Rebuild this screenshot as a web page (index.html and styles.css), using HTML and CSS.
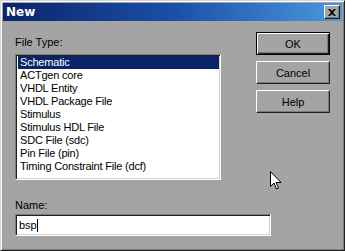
FILE: index.html
```html
<!DOCTYPE html>
<html lang="en">
<head>
    <meta charset="UTF-8">
    <title>New</title>
    <link rel="stylesheet" href="styles.css">
</head>
<body>
    <div class="window">
        <div class="titlebar">
            <span class="title">New</span>
            <span class="close-btn">
                <svg width="8" height="7" viewBox="0 0 8 7"><path d="M0 0h2l2 2 2-2h2L5 3.5 8 7H6L4 5 2 7H0l3-3.5z" fill="#000"/></svg>
            </span>
        </div>

        <div class="content">
            <div class="top-row">
                <div class="left-col">
                    <div class="label">File Type:</div>
                    <ul class="listbox">
                        <li class="selected">Schematic</li>
                        <li>ACTgen core</li>
                        <li>VHDL Entity</li>
                        <li>VHDL Package File</li>
                        <li>Stimulus</li>
                        <li>Stimulus HDL File</li>
                        <li>SDC File (sdc)</li>
                        <li>Pin File (pin)</li>
                        <li>Timing Constraint File (dcf)</li>
                    </ul>
                </div>

                <div class="right-col">
                    <button class="btn default">OK</button>
                    <button class="btn">Cancel</button>
                    <button class="btn">Help</button>
                </div>
            </div>

            <div class="name-row">
                <div class="label">Name:</div>
                <div class="textbox">bsp<span class="caret"></span></div>
            </div>
        </div>

        <!-- mouse pointer sitting over the dialog -->
        <svg class="cursor" width="12" height="19" viewBox="0 0 12 19">
            <path d="M0.5 0.5v15l3.5-3.5 2.5 6 2-1-2.5-5.5h5z" fill="#fff" stroke="#000"/>
        </svg>
    </div>
</body>
</html>
```

FILE: styles.css
```css
body {
    margin: 0;
    font-family: "Liberation Sans", Arial, sans-serif;
    font-size: 11px;
}

.window {
    position: relative;
    width: 345px;
    height: 251px;
    box-sizing: border-box;
    background: #a4a4a4;
    border: 1px solid;
    border-color: #d4d4d4 #202020 #202020 #d4d4d4;
    box-shadow: inset 1px 1px 0 #fff, inset -1px -1px 0 #7c7c7c;
    padding: 2px;
}

.titlebar {
    height: 18px;
    display: flex;
    align-items: center;
    justify-content: space-between;
    padding: 0 2px 0 3px;
    background: linear-gradient(to right, #0a246a, #1a4fa8 50%, #4a98e0);
}

.title {
    color: #fff;
    font-weight: bold;
    font-size: 12px;
    font-family: "DejaVu Sans", sans-serif;
}

.close-btn {
    width: 16px;
    height: 14px;
    box-sizing: border-box;
    background: #a4a4a4;
    border: 1px solid;
    border-color: #fff #202020 #202020 #fff;
    box-shadow: inset -1px -1px 0 #7c7c7c;
    display: flex;
    align-items: center;
    justify-content: center;
}

.content {
    padding: 0 0 0 12px;
}

.top-row {
    display: flex;
    justify-content: space-between;
}

.left-col {
    padding-top: 14px;
}

.label {
    color: #000;
    height: 14px;
    line-height: 14px;
}

.listbox {
    list-style: none;
    margin: 5px 0 0 0;
    padding: 1px 1px;
    width: 206px;
    height: 126px;
    box-sizing: border-box;
    background: #fff;
    border: 1px solid;
    border-color: #7c7c7c #fff #fff #7c7c7c;
    box-shadow: inset 1px 1px 0 #202020, inset -1px -1px 0 #d4d4d4;
    letter-spacing: -0.2px;
}

.listbox li {
    height: 13px;
    line-height: 13px;
    padding-left: 2px;
    margin-left: 1px;
}

.listbox li.selected {
    background: #0a246a;
    color: #fff;
}

.right-col {
    display: flex;
    flex-direction: column;
    padding: 11px 12px 0 0;
    gap: 6px;
}

.btn {
    width: 74px;
    height: 23px;
    box-sizing: border-box;
    font-family: "Liberation Sans", Arial, sans-serif;
    font-size: 11px;
    color: #000;
    background: #a4a4a4;
    border: 1px solid;
    border-color: #fff #202020 #202020 #fff;
    box-shadow: inset -1px -1px 0 #7c7c7c;
    padding: 0;
}

.btn.default {
    border: 1px solid #000;
    box-shadow: inset 1px 1px 0 #fff, inset -1px -1px 0 #202020, inset -2px -2px 0 #7c7c7c;
}

.name-row {
    padding-top: 18px;
}

.textbox {
    margin-top: 2px;
    width: 256px;
    height: 22px;
    box-sizing: border-box;
    background: #fff;
    border: 1px solid;
    border-color: #7c7c7c #fff #fff #7c7c7c;
    box-shadow: inset 1px 1px 0 #202020, inset -1px -1px 0 #d4d4d4;
    padding: 3px 3px;
    line-height: 14px;
    display: flex;
    align-items: center;
}

.caret {
    width: 1px;
    height: 13px;
    background: #000;
}

.cursor {
    position: absolute;
    left: 269px;
    top: 170px;
}
```
